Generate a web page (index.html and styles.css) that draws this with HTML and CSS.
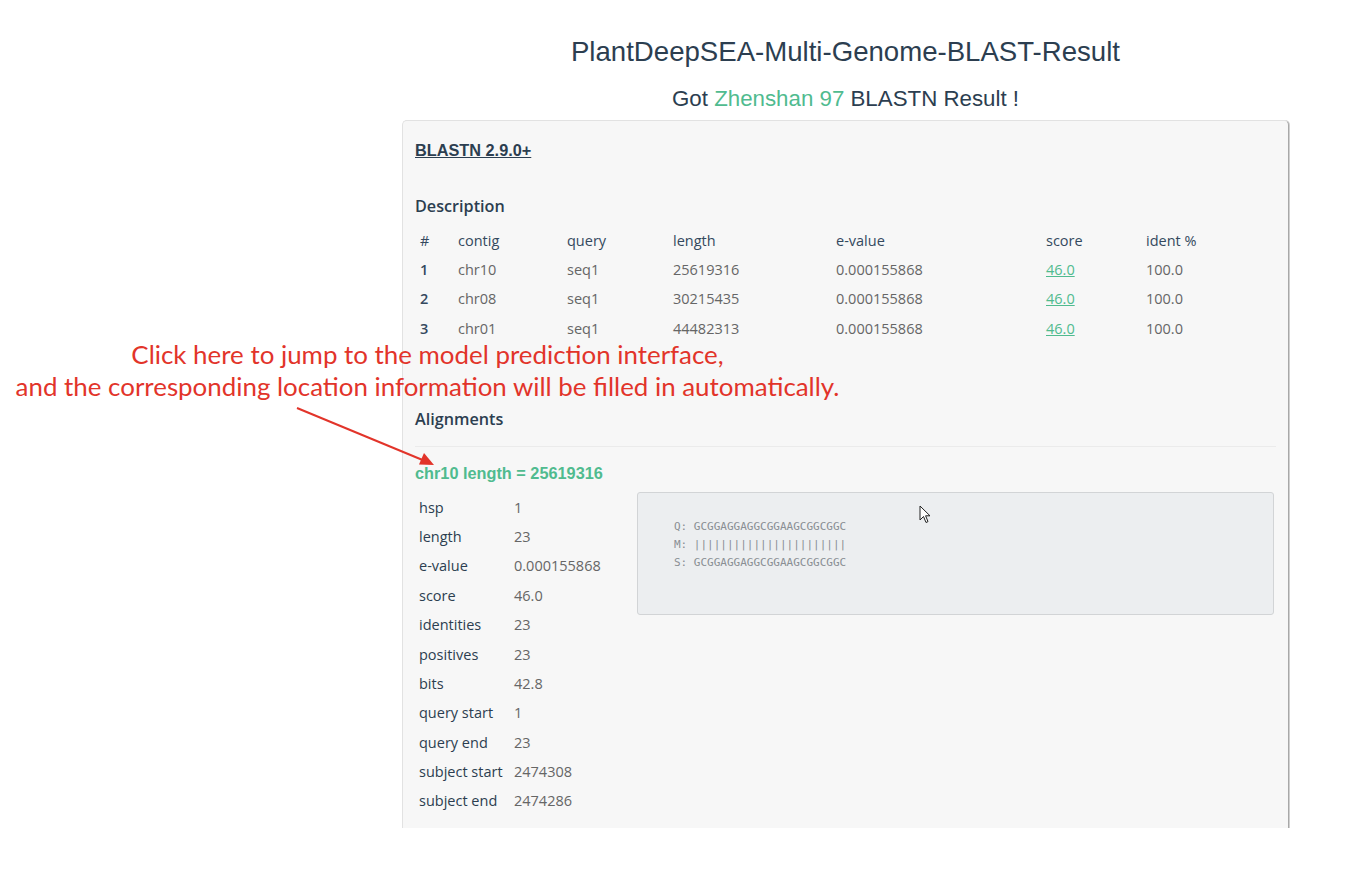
FILE: index.html
```html
<!DOCTYPE html>
<html lang="en">
<head>
<meta charset="utf-8">
<title>PlantDeepSEA BLAST Result</title>
<link rel="stylesheet" href="styles.css">
</head>
<body>
<div class="page">
  <main class="main">
    <h1 class="title">PlantDeepSEA-Multi-Genome-BLAST-Result</h1>
    <h2 class="subtitle">Got <span class="green">Zhenshan 97</span> BLASTN Result !</h2>
    <section class="card">
      <div class="program"><a href="#">BLASTN 2.9.0+</a></div>

      <h3 class="section-title desc-title">Description</h3>
      <div class="desc-table">
        <div class="row head">
          <span class="c num">#</span><span class="c">contig</span><span class="c">query</span><span class="c">length</span><span class="c">e-value</span><span class="c">score</span><span class="c">ident %</span>
        </div>
        <div class="row">
          <span class="c num">1</span><span class="c">chr10</span><span class="c">seq1</span><span class="c">25619316</span><span class="c">0.000155868</span><span class="c"><a class="score" href="#">46.0</a></span><span class="c">100.0</span>
        </div>
        <div class="row">
          <span class="c num">2</span><span class="c">chr08</span><span class="c">seq1</span><span class="c">30215435</span><span class="c">0.000155868</span><span class="c"><a class="score" href="#">46.0</a></span><span class="c">100.0</span>
        </div>
        <div class="row">
          <span class="c num">3</span><span class="c">chr01</span><span class="c">seq1</span><span class="c">44482313</span><span class="c">0.000155868</span><span class="c"><a class="score" href="#">46.0</a></span><span class="c">100.0</span>
        </div>
      </div>

      <h3 class="section-title align-title">Alignments</h3>
      <hr class="divider">
      <h4 class="hit-title">chr10 length = 25619316</h4>
      <div class="hsp">
        <div class="hsp-table">
          <span class="k">hsp</span><span class="v">1</span>
          <span class="k">length</span><span class="v">23</span>
          <span class="k">e-value</span><span class="v">0.000155868</span>
          <span class="k">score</span><span class="v">46.0</span>
          <span class="k">identities</span><span class="v">23</span>
          <span class="k">positives</span><span class="v">23</span>
          <span class="k">bits</span><span class="v">42.8</span>
          <span class="k">query start</span><span class="v">1</span>
          <span class="k">query end</span><span class="v">23</span>
          <span class="k">subject start</span><span class="v">2474308</span>
          <span class="k">subject end</span><span class="v">2474286</span>
        </div>
        <pre class="alignment">Q: GCGGAGGAGGCGGAAGCGGCGGC
M: |||||||||||||||||||||||
S: GCGGAGGAGGCGGAAGCGGCGGC</pre>
      </div>
    </section>
  </main>

  <svg class="cursor" width="12" height="19" viewBox="0 0 12 19" aria-hidden="true">
    <path d="M1 1 L1 15 L4.5 11.5 L7 17.5 L9 16.6 L6.6 10.8 L11 10.8 Z" fill="#fff" stroke="#222" stroke-width="1" stroke-linejoin="round"/>
  </svg>

  <div class="note">
    <p>Click here to jump to the model prediction interface,</p>
    <p>and the corresponding location information will be filled in automatically.</p>
  </div>
  <svg class="arrow" width="160" height="70" viewBox="0 0 160 70" aria-hidden="true">
    <line x1="2" y1="2" x2="130" y2="55" stroke="#e2342a" stroke-width="2"/>
    <path d="M139 59 L124 58.5 L129 47 Z" fill="#e2342a"/>
  </svg>
</div>
</body>
</html>
```

FILE: styles.css
```css
* { box-sizing: border-box; }
html, body { margin: 0; padding: 0; background: #fff; }
body {
  width: 1352px;
  height: 890px;
  overflow: hidden;
  font-family: "Open Sans", "Liberation Sans", sans-serif;
  color: #2c3e50;
}
.page { position: relative; width: 1352px; height: 890px; }
.main {
  width: 887px;
  margin-left: 402px;
  padding-top: 36px;
  display: flex;
  flex-direction: column;
}
.title {
  margin: 0;
  text-align: center;
  font-family: "Liberation Sans", Arial, sans-serif;
  font-weight: normal;
  font-size: 27.6px;
  line-height: 32px;
  color: #2c3e50;
}
.subtitle {
  margin: 18px 0 0 0;
  text-align: center;
  font-family: "Liberation Sans", Arial, sans-serif;
  font-weight: normal;
  font-size: 22.3px;
  line-height: 26px;
  color: #2c3e50;
}
.green { color: #50bb8f; }
.card {
  margin-top: 8px;
  height: 708px;
  background: #f7f7f7;
  border: 1px solid #e2e2e2;
  border-right: 1px solid #a8a8a8;
  border-bottom: none;
  border-radius: 5px 5px 0 0;
  box-shadow: 1px 0 0 #d0d0d0;
  padding: 19px 12px 0 12px;
}
.program { line-height: 20px; height: 20px; }
.program a {
  font-family: "Liberation Sans", Arial, sans-serif;
  font-weight: bold;
  font-size: 16.3px;
  line-height: 20px;
  color: #2c3e50;
  text-decoration: underline;
}
.section-title {
  margin: 0;
  font-family: "Open Sans", sans-serif;
  font-weight: 600;
  font-size: 16.2px;
  line-height: 20px;
  color: #2c3e50;
}
.desc-title { margin-top: 36px; }
.desc-table { margin-top: 9.5px; display: flex; flex-direction: column; }
.row {
  display: grid;
  grid-template-columns: 38px 109px 106px 163px 210px 100px 1fr;
  height: 29.3px;
  align-items: center;
  font-size: 14.5px;
  color: #666;
}
.row.head { color: #34495e; }
.c { padding-left: 5px; white-space: nowrap; }
.num { color: #34495e; font-weight: 600; }
.row.head .num { font-weight: normal; }
.score { color: #50bb8f; text-decoration: underline; }
.align-title { margin-top: 66.4px; }
.divider {
  margin: 17px 0 0 0;
  border: none;
  border-top: 1px solid #ebebeb;
  height: 0;
}
.hit-title {
  margin: 15px 0 0 0;
  font-family: "Liberation Sans", Arial, sans-serif;
  font-weight: bold;
  font-size: 16.3px;
  line-height: 22px;
  color: #50bb8f;
}
.hsp {
  margin-top: 8.3px;
  display: flex;
  align-items: flex-start;
}
.hsp-table {
  width: 222px;
  display: grid;
  grid-template-columns: 99px 1fr;
  grid-auto-rows: 29.4px;
  align-items: center;
  font-size: 14.5px;
  white-space: nowrap;
}
.k { padding-left: 4px; color: #2c3e50; }
.v { color: #666; }
.alignment {
  flex: 1;
  margin: 0 2px 0 0;
  height: 123px;
  background: #eceef0;
  border: 1px solid #d2d4d6;
  border-radius: 3px;
  padding: 25px 36px;
  font-family: "DejaVu Sans Mono", monospace;
  font-size: 11px;
  line-height: 18px;
  color: #8a8f94;
}
.cursor { position: absolute; left: 919px; top: 505px; }
.note {
  position: absolute;
  left: 0;
  top: 338px;
  width: 855px;
  text-align: center;
  font-family: Lato, "Open Sans", sans-serif;
  font-size: 25.9px;
  line-height: 32px;
  color: #e2342a;
}
.note p { margin: 0; }
.arrow { position: absolute; left: 295px; top: 406px; }
```
